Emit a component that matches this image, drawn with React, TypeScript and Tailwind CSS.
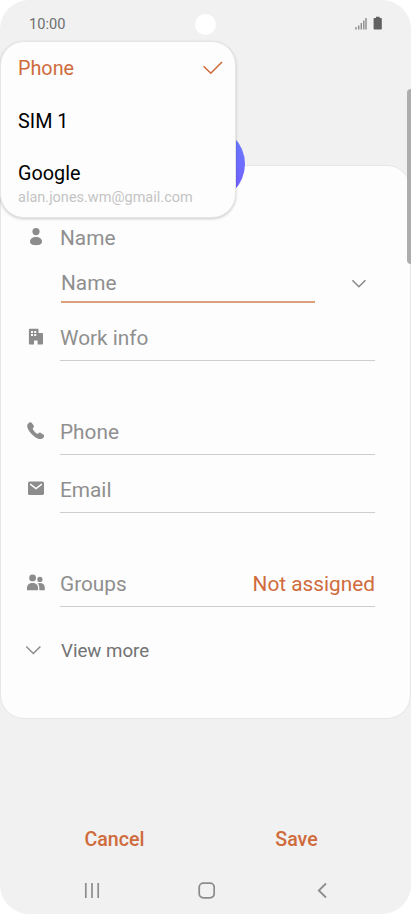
import type { ReactNode } from 'react';

type FieldRowProps = {
  icon: ReactNode;
  label: string;
  value?: string;
  className?: string;
};

/** 20x20 wrapper shared by all of the row icons */
function RowIcon({ children }: { children: ReactNode }) {
  return (
    <svg className="mb-0.5 h-5 w-5 shrink-0" viewBox="0 0 20 20" fill="#8c8c8c">
      {children}
    </svg>
  );
}

function PersonIcon() {
  return (
    <RowIcon>
      <circle cx="10" cy="4.6" r="3.6" />
      <path d="M4 14.6C4 11.8 6.7 10 10 10s6 1.8 6 4.6C16 17.2 13.6 18.2 10 18.2s-6-1-6-3.6z" />
    </RowIcon>
  );
}

function BuildingIcon() {
  return (
    <RowIcon>
      <path
        fillRule="evenodd"
        d="M4.1 1.7h7.4c.6 0 1 .4 1 1v3.2h3.5c.6 0 1 .4 1 1v9.6c0 .6-.4 1-1 1h-4.4v-4H8v4H3.9c-.6 0-1-.4-1-1V2.9c0-.7.5-1.2 1.2-1.2zM5 4v1.9h2V4zm3.2 0v1.9h2V4zM5 7.1V9h2V7.1zm3.2 0V9h2V7.1z"
      />
    </RowIcon>
  );
}

function PhoneIcon() {
  return (
    <RowIcon>
      <path d="M2.2 2.5C3.3 1.4 5 .9 5.8 1.9l1.9 2.7c.6.9.2 1.7-.6 2.5-.5.5-.4 1 0 1.6 1 1.6 2 2.7 3.6 3.8.7.4 1.1.5 1.6 0 .8-.8 1.6-1.2 2.5-.6l2.8 1.9c1 .8.5 2.4-.6 3.5-1.4 1.2-3.8 1-6.4-.4-3.7-2-6.8-5.2-8.6-8.9C.9 5.6.9 3.7 2.2 2.5z" />
    </RowIcon>
  );
}

function MailIcon() {
  return (
    <RowIcon>
      <rect x="2" y="2.6" width="16" height="13.4" rx="1.6" />
      <path
        d="M4.2 5.2 10 9.6l5.8-4.4"
        fill="none"
        stroke="#fdfdfd"
        strokeWidth="1.5"
      />
    </RowIcon>
  );
}

function GroupIcon() {
  return (
    <RowIcon>
      <circle cx="6.6" cy="4.9" r="3.4" />
      <circle cx="13.9" cy="6.4" r="2.6" />
      <path d="M1 17.2v-2.4C1 11.7 3.4 10 6.5 10s5.5 1.7 5.5 4.8v2.4z" />
      <path d="M13.3 17.2v-2.6c0-1.8-.6-3.2-1.6-4.2.6-.3 1.4-.5 2.2-.5 2.9 0 4.9 1.7 4.9 4.6v2.7z" />
    </RowIcon>
  );
}

function FieldRow({ icon, label, value, className = '' }: FieldRowProps) {
  return (
    <div className={`flex h-[45px] ${className}`}>
      <div className="flex w-[34px] items-center pb-px">{icon}</div>
      <div className="flex flex-1 items-center justify-between border-b border-[#cdcdcd]">
        <span>{label}</span>
        {value && <span className="text-[#cf6b3c]">{value}</span>}
      </div>
    </div>
  );
}

function StatusBar() {
  return (
    <header className="flex h-12 items-center pr-7 pl-[29px]">
      <span className="w-[166px] text-[14.6px] leading-5 text-[#6e6e6e]">10:00</span>
      <span className="h-[21px] w-[21px] rounded-full bg-white" />
      <svg className="mb-0.5 ml-auto h-[14px] w-7" viewBox="0 0 28 14">
        <path
          d="M1 13.5V11M3.700 13.500V9.500M6.300 13.500V7M8.800 13.500V4.500M11 13.500V2"
          stroke="#8a8a8a"
          strokeWidth="1.4"
        />
        <path
          d="M21 .7h3.600V2h1.500c.4 0 .7.300.7.700v10c0 .4-.3.700-.7.700h-6.800a.7.700 0 0 1-.7-.7v-10c0-.4.300-.7.700-.7H21z"
          fill="#616161"
        />
      </svg>
    </header>
  );
}

function AccountMenu() {
  return (
    <div className="absolute top-[41px] left-0 h-[177px] w-[235.5px] rounded-[24px] border border-[#e6e6e6] bg-[#fdfdfd] pl-[17px] text-[19.8px] leading-6 text-black shadow-[0_1px_3px_rgba(0,0,0,0.2)]">
      <div className="mt-[15px] flex items-center justify-between pr-[11.5px] text-[#cf6b3c]">
        <span>Phone</span>
        <svg className="mb-0.5 h-[14px] w-5" viewBox="0 0 20 14" fill="none">
          <path d="M.6 5.2 7.8 12.2 19 1" stroke="#cf6b3c" strokeWidth="1.6" />
        </svg>
      </div>
      <div className="mt-[29px]">SIM 1</div>
      <div className="mt-[28px]">Google</div>
      <div className="text-[14.5px] leading-[23px] text-[#c4c4c4]">
        alan.jones.wm@gmail.com
      </div>
    </div>
  );
}

function ContactForm() {
  return (
    <main className="mt-[117px] h-[554px] rounded-[24px] border border-[#e6e6e6] bg-[#fdfdfd] pt-14 pr-[35px] pl-[25px] text-[20.8px] leading-8 text-[#8f8f8f]">
      <div className="flex h-8 items-center">
        <div className="w-[34px]">
          <PersonIcon />
        </div>
        <span>Name</span>
      </div>

      <div className="mt-[11px] flex h-[38px] justify-between pr-2 pl-[35px]">
        <div className="flex w-[254px] items-center border-b-2 border-[#dc9f7c]">
          Name
        </div>
        <svg className="mt-[14px] h-[10px] w-4" viewBox="0 0 16 10" fill="none">
          <path d="M1.4 1.2 7.9 7.7l6.5-6.5" stroke="#8a8a8a" strokeWidth="1.6" />
        </svg>
      </div>

      <FieldRow className="mt-[13px]" icon={<BuildingIcon />} label="Work info" />
      <FieldRow className="mt-[49px]" icon={<PhoneIcon />} label="Phone" />
      <FieldRow className="mt-[13px]" icon={<MailIcon />} label="Email" />
      <FieldRow
        className="mt-[49px]"
        icon={<GroupIcon />}
        label="Groups"
        value="Not assigned"
      />

      <div className="mt-7 flex h-8 items-center text-[18.7px] text-[#737373]">
        <svg className="mr-[19px] mb-0.5 h-[10px] w-4" viewBox="0 0 16 10" fill="none">
          <path d="M.2 1.5 7.3 8.5l7.1-7" stroke="#8a8a8a" strokeWidth="1.5" />
        </svg>
        View more
      </div>
    </main>
  );
}

function NavigationBar() {
  return (
    <nav className="mt-[30px] flex items-center pl-[84px] text-[#8c8c8c]">
      <svg className="h-[17px] w-4" viewBox="0 0 16 17" stroke="currentColor" strokeWidth="1.7">
        <path d="M1.8 1v15M8 1v15M14.2 1v15" />
      </svg>
      <svg className="ml-[98px] h-[17px] w-[17px]" viewBox="0 0 17 17" fill="none">
        <rect x="1.2" y="1.2" width="15" height="14.6" rx="4.2" stroke="currentColor" strokeWidth="1.8" />
      </svg>
      <svg className="ml-[102px] h-[17px] w-[10px]" viewBox="0 0 10 17" fill="none">
        <path d="M9 1.5 1.8 8.5 9 15.5" stroke="currentColor" strokeWidth="1.8" />
      </svg>
    </nav>
  );
}

export default function App() {
  return (
    <div className="h-[914px] w-[411px] overflow-hidden bg-white font-[Roboto,sans-serif]">
      <div className="relative h-full overflow-hidden rounded-[29px] bg-[#f1f1f1]">
        <StatusBar />
        <ContactForm />

        {/* Contact photo, mostly covered by the menu */}
        <div className="absolute top-[126px] left-[169px] h-[76px] w-[76px] rounded-full bg-gradient-to-b from-[#677fff] to-[#7358ff]" />
        <AccountMenu />
        <div className="absolute top-[89px] right-0 h-[175px] w-1 rounded-l-sm bg-[#adadad]" />

        <div className="mt-[109px] flex pl-[62px] text-center text-[19.6px] leading-6 font-medium text-[#cf6b3c]">
          <button className="w-[105px]">Cancel</button>
          <button className="ml-[77px] w-[105px]">Save</button>
        </div>
        <NavigationBar />
      </div>
    </div>
  );
}
